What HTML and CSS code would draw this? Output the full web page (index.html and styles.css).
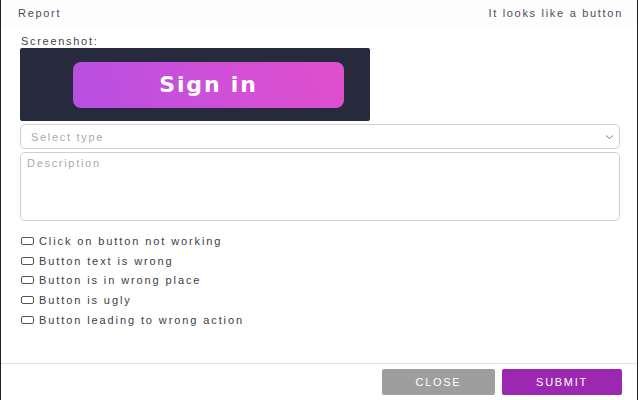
FILE: index.html
```html
<!DOCTYPE html>
<html>
<head>
<meta charset="utf-8">
<link rel="stylesheet" href="styles.css">
</head>
<body>
<div class="dialog">
  <header class="head">
    <span class="title">Report</span>
    <span class="subtitle">It looks like a button</span>
  </header>
  <main class="content">
    <div class="label">Screenshot:</div>
    <div class="shot">
      <div class="shot-btn">Sign in</div>
    </div>
    <div class="select">
      <span class="placeholder">Select type</span>
      <svg class="chev" width="9" height="6" viewBox="0 0 9 6"><path d="M1 1.5 L4.5 4.5 L8 1.5" fill="none" stroke="#777" stroke-width="1"/></svg>
    </div>
    <div class="textarea"><span class="placeholder">Description</span></div>
    <ul class="checks">
      <li><span class="box"></span>Click on button not working</li>
      <li><span class="box"></span>Button text is wrong</li>
      <li><span class="box"></span>Button is in wrong place</li>
      <li><span class="box"></span>Button is ugly</li>
      <li><span class="box"></span>Button leading to wrong action</li>
    </ul>
  </main>
  <footer class="foot">
    <button class="btn close">CLOSE</button>
    <button class="btn submit">SUBMIT</button>
  </footer>
</div>
</body>
</html>
```
FILE: styles.css
```css
html, body {
  margin: 0;
  padding: 0;
  background: #fff;
}
body {
  width: 640px;
  height: 400px;
  overflow: hidden;
  font-family: "Liberation Sans", Arial, sans-serif;
  font-size: 11px;
  letter-spacing: 1.7px;
  color: #444;
}
.dialog {
  width: 638px;
  height: 400px;
  border-left: 1px solid #222;
  border-right: 1px solid #222;
  display: flex;
  flex-direction: column;
  box-sizing: border-box;
}
.head {
  height: 28px;
  display: flex;
  justify-content: space-between;
  align-items: flex-start;
  padding: 7px 14px 0 17px;
  box-sizing: border-box;
  background: #fdfdfd;
  color: #4a4e5a;
}
.content {
  flex: 1;
  padding: 7px 17px 0 19px;
}
.label {
  height: 13px;
  line-height: 13px;
  color: #444;
  padding-left: 1px;
}
.shot {
  width: 350px;
  height: 73px;
  background: #262a3c;
  border-radius: 2px;
  display: flex;
  align-items: center;
  padding-left: 53px;
  box-sizing: border-box;
}
.shot-btn {
  width: 271px;
  height: 46px;
  border-radius: 8px;
  background: linear-gradient(70deg, #b650e2 0%, #d24fd6 60%, #e04fcb 100%);
  color: #fff;
  font-family: "DejaVu Sans", sans-serif;
  font-weight: bold;
  font-size: 22px;
  letter-spacing: 1.8px;
  display: flex;
  align-items: center;
  justify-content: center;
}
.select {
  margin-top: 3px;
  height: 25px;
  border: 1px solid #cfcfcf;
  border-radius: 5px;
  box-sizing: border-box;
  display: flex;
  align-items: center;
  justify-content: space-between;
  padding: 0 5px 0 10px;
}
.placeholder {
  color: #aaa;
}
.textarea {
  margin-top: 3px;
  height: 69px;
  border: 1px solid #cfcfcf;
  border-radius: 5px;
  box-sizing: border-box;
  padding: 4px 6px;
}
.checks {
  list-style: none;
  margin: 10px 0 0;
  padding: 0;
}
.checks li {
  height: 19.7px;
  display: flex;
  align-items: center;
  color: #3c3c46;
  letter-spacing: 1.9px;
}
.box {
  width: 13px;
  height: 8px;
  border: 1px solid #555;
  border-radius: 2px;
  box-sizing: border-box;
  margin: 0 5px 0 1px;
}
.foot {
  height: 37px;
  box-sizing: border-box;
  border-top: 1px solid #e2e2e2;
  display: flex;
  justify-content: flex-end;
  align-items: flex-start;
  padding: 5px 15px 0 0;
  gap: 7px;
}
.btn {
  height: 26px;
  border: none;
  border-radius: 2px;
  color: #fff;
  font-family: "Liberation Sans", Arial, sans-serif;
  font-size: 11px;
  letter-spacing: 1.7px;
  padding: 0;
}
.close {
  width: 113px;
  background: #9e9e9e;
}
.submit {
  width: 120px;
  background: #9c27b0;
}
```
